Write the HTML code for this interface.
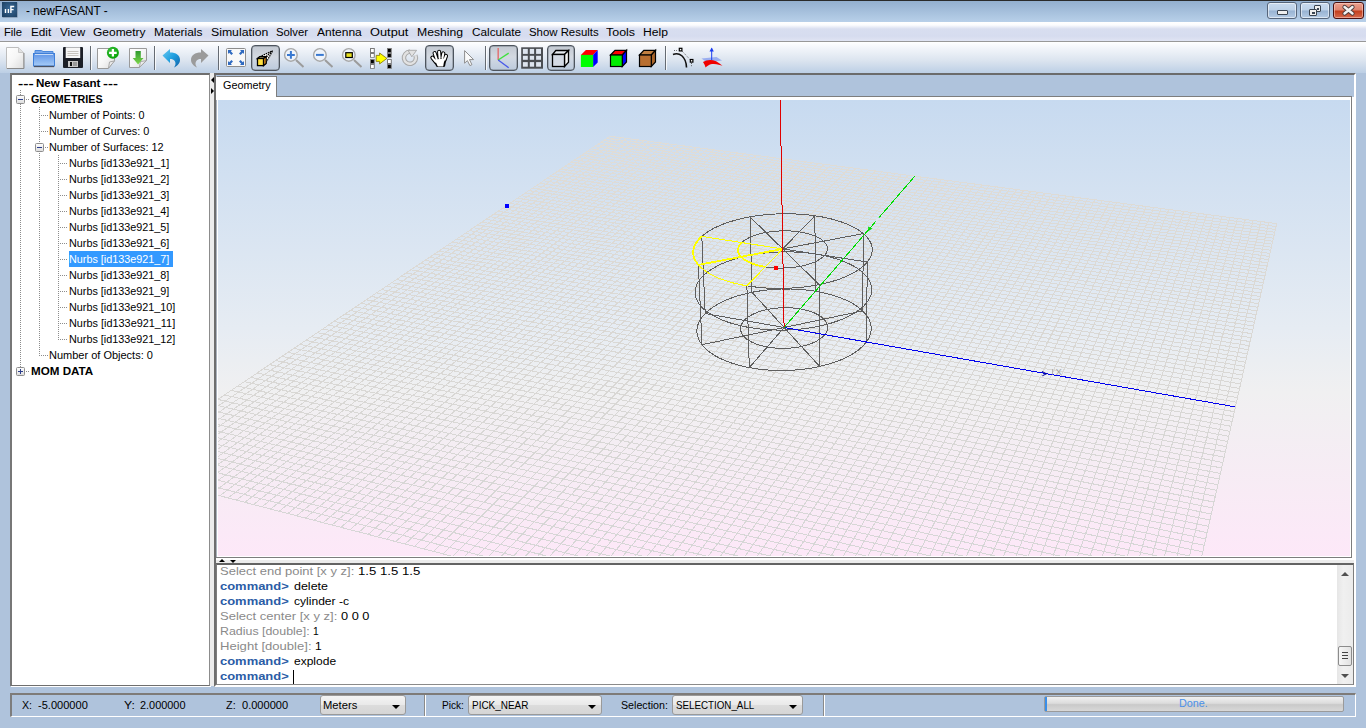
<!DOCTYPE html>
<html><head><meta charset="utf-8">
<style>
*{margin:0;padding:0;box-sizing:border-box}
html,body{width:1366px;height:728px;overflow:hidden}
body{position:relative;background:#afc3dc;font-family:"Liberation Sans",sans-serif;color:#000}
.a{position:absolute}
.t{position:absolute;white-space:nowrap;line-height:1}
#title{left:0;top:0;width:1366px;height:22px;background:linear-gradient(#93afcf,#b8d0e9);border-top:1px solid #2a2a2a}
#menu{left:0;top:22px;width:1366px;height:20px;background:linear-gradient(#ffffff 0,#fbfcfe 3px,#d8def0 7px,#d6dcef 75%,#e0e4f3 100%);border-bottom:1px solid #989898}
#tool{left:0;top:42px;width:1366px;height:31px;background:linear-gradient(#ffffff 0%,#f2f5fa 20%,#dbe4ef 60%,#bccfe5 100%)}
.mi{position:absolute;top:25px;font-size:12.5px;line-height:14px;white-space:nowrap}
.tree{position:absolute;font-size:11px;line-height:13px;white-space:nowrap;color:#000}
.con{position:absolute;left:220px;font-size:12px;line-height:14px;white-space:nowrap;color:#000}
.con b{color:#2a5ea8}
.con i{font-style:normal;color:#8a8a8a}
.st{position:absolute;top:699px;font-size:11px;line-height:13px;white-space:nowrap;color:#000}
.combo{position:absolute;top:695px;height:20px;border:1px solid #9a9a9a;border-radius:3px;background:linear-gradient(#f4f4f4,#e9e9e9 50%,#dcdcdc 51%,#d5d5d5);font-size:11px;line-height:17px;padding-left:3px;white-space:nowrap}
.combo:after{content:"";position:absolute;right:5px;top:9px;border-left:4px solid transparent;border-right:4px solid transparent;border-top:4px solid #000}
.btnp{position:absolute;top:45px;height:26px;border:1px solid #4e555e;border-radius:4px;background:linear-gradient(#c3c9d2 0,#d3d9e1 45%,#cfd7e2 55%,#bccadc 100%);box-shadow:inset 0 0 0 0.5px #7a828c}
.sep{position:absolute;top:46px;width:1px;height:24px;background:#7b8796;border-right:1px solid #f4f7fb;width:2px}
.tx{position:absolute;white-space:nowrap;transform-origin:0 0}
</style></head><body>
<div id="title" class="a"></div>
<div class="a" style="left:2px;top:2px;width:15px;height:15px;background:radial-gradient(circle at 55% 45%,#3a6a98,#1f4366 85%);box-shadow:0.5px 0.5px 0 #6a7d94"></div>
<svg class="a" style="left:0;top:0" width="20" height="20"><path d="M5.5 9V13M8.4 9V13M10.9 13V6.5H14.2M10.9 9.6H13.6" stroke="#fff" stroke-width="1.4" fill="none"/></svg>
<div class="a" style="left:1267px;top:2px;width:30px;height:17px;border:1px solid #56657a;border-radius:3px;background:linear-gradient(#c9daee 0,#bcd0e7 48%,#98b3d2 52%,#b5cbe5 100%);box-shadow:inset 0 0 0 1px rgba(255,255,255,.55)"></div>
<div class="a" style="left:1277px;top:10px;width:11px;height:5px;border:1px solid #3a4450;border-radius:1px;background:#eeeeee"></div>
<div class="a" style="left:1300px;top:2px;width:30px;height:17px;border:1px solid #56657a;border-radius:3px;background:linear-gradient(#c9daee 0,#bcd0e7 48%,#98b3d2 52%,#b5cbe5 100%);box-shadow:inset 0 0 0 1px rgba(255,255,255,.55)"></div>
<div class="a" style="left:1314px;top:5px;width:7px;height:7px;border:1.5px solid #3a4450;border-radius:1px;background:#eee"></div><div class="a" style="left:1316.5px;top:7.5px;width:2px;height:2px;border:1px solid #3a4450"></div>
<div class="a" style="left:1309px;top:9px;width:8px;height:7px;border:1.5px solid #3a4450;border-radius:1px;background:#eee"></div><div class="a" style="left:1311.5px;top:11.5px;width:3px;height:2px;border:1px solid #3a4450"></div>
<div class="a" style="left:1333px;top:2px;width:31px;height:17px;border:1px solid #4a1010;border-radius:3px;background:linear-gradient(#eaa08e 0,#de8470 45%,#c4401e 55%,#d66a4e 100%);box-shadow:inset 0 0 0 1px rgba(255,220,210,.5)"></div>
<svg class="a" style="left:1341px;top:4px" width="15" height="13" viewBox="0 0 15 13"><path d="M3.5 3 L11.5 9.5 M11.5 3 L3.5 9.5" stroke="#4a3a3a" stroke-width="4.2" stroke-linecap="round"/><path d="M3.5 3 L11.5 9.5 M11.5 3 L3.5 9.5" stroke="#f2f2f2" stroke-width="2.4" stroke-linecap="round"/></svg>
<div id="menu" class="a"></div>
<div id="tool" class="a"></div>
<!-- pressed buttons -->
<div class="btnp" style="left:251px;width:29px"></div>
<div class="btnp" style="left:425px;width:29px"></div>
<div class="btnp" style="left:489px;width:29px"></div>
<div class="btnp" style="left:547px;width:28px"></div>
<svg class="a" style="left:0;top:42px" width="740" height="31" viewBox="0 42 740 31">
<defs>
<linearGradient id="pg" x1="0" y1="0" x2="1" y2="1"><stop offset="0" stop-color="#ffffff"/><stop offset="0.5" stop-color="#f6f6f6"/><stop offset="1" stop-color="#dcdcdc"/></linearGradient>
<linearGradient id="fg" x1="0" y1="0" x2="0" y2="1"><stop offset="0" stop-color="#5f94e6"/><stop offset="1" stop-color="#a6ccf8"/></linearGradient>
<linearGradient id="gg" x1="0" y1="0" x2="0" y2="1"><stop offset="0" stop-color="#2f9a2f"/><stop offset="1" stop-color="#7fd84a"/></linearGradient>
<linearGradient id="ug" x1="0" y1="0" x2="1" y2="1"><stop offset="0" stop-color="#6cc8f0"/><stop offset="0.5" stop-color="#20a0e0"/><stop offset="1" stop-color="#1060a8"/></linearGradient>
<radialGradient id="cg" cx="0.4" cy="0.35" r="0.7"><stop offset="0" stop-color="#40c040"/><stop offset="1" stop-color="#00a000"/></radialGradient>
</defs>
<!-- new file -->
<path d="M6.5 47.5H18.5L23.5 52.5V68.5H6.5Z" fill="url(#pg)" stroke="#bdbdbd"/>
<path d="M7 68.5H24V53" stroke="#8a8a8a" fill="none"/>
<path d="M18.5 47.5V52.5H23.5" fill="#e2e2e2" stroke="#c8c8c8"/>
<!-- folder -->
<path d="M35 50.5H41.5L43 51.5H53V54H35Z" fill="#7aa8ea" stroke="#4a88dc"/>
<rect x="33.5" y="53.5" width="21" height="12.5" fill="url(#fg)" stroke="#3f7fd8"/>
<path d="M35 54.5H53" stroke="#c8dcf8"/>
<path d="M34 66.5H54" stroke="#4a5262" stroke-width="1.3"/>
<!-- save -->
<rect x="63" y="47" width="20" height="21" rx="1" fill="#1c1f27"/>
<rect x="65.7" y="47.3" width="14.5" height="10.7" fill="#f6f6f6"/>
<path d="M67.5 51.5H78.5M67.5 53.5H78.5M67.5 55.5H78.5" stroke="#c8c4be"/>
<rect x="68" y="61" width="10" height="6" fill="#c8c8c8"/>
<rect x="70" y="62" width="2" height="4" fill="#111"/>
<rect x="73" y="62" width="4" height="4" fill="#9a9a9a"/>
<!-- separators -->
<path d="M90.5 46V70M154.5 46V70M218.5 46V70M485.5 46V70M665.5 46V70" stroke="#656b73"/><path d="M91.5 46V70M155.5 46V70M219.5 46V70M486.5 46V70M666.5 46V70" stroke="#ffffff" stroke-opacity="0.8"/>
<!-- new doc plus -->
<path d="M97.5 48.5H114.5V60.7L108.3 68.5H97.5Z" fill="url(#pg)" stroke="#9a9a9a"/>
<path d="M108.5 68.2L109.5 62L114.5 60.9Z" fill="#ececec" stroke="#a0a0a0" stroke-width="0.9"/>
<circle cx="112.9" cy="52.8" r="6" fill="url(#cg)"/>
<path d="M112.9 49V56.6M109.1 52.8H116.7" stroke="#fff" stroke-width="2.2"/>
<!-- import -->
<path d="M129.5 48.5H146.5V60.5L139.2 67.5H129.5Z" fill="url(#pg)" stroke="#9a9a9a"/>
<path d="M139.4 67.3L140.5 61.5L146.3 60.7Z" fill="#ececec" stroke="#a0a0a0" stroke-width="0.9"/>
<path d="M135.5 51H140.8V58H143.5L138.1 64.5L132.7 58H135.5Z" fill="url(#gg)"/>
<!-- undo -->
<path d="M162.5 55.5L170 49V52.5C176 52.5 180 55 180 60C180 63.5 177 66 174 67.5C175.5 65.5 176 63.5 175 61.5C174 59.5 172 59 170 59V63Z" fill="url(#ug)"/>
<!-- redo -->
<path d="M208.5 55.5L201 49V52.5C195 52.5 191 55 191 60C191 63.5 194 66 197 67.5C195.5 65.5 195 63.5 196 61.5C197 59.5 199 59 201 59V63Z" fill="#9b9b9b"/>
<!-- fit -->
<rect x="226.5" y="48.5" width="19" height="18" rx="1" fill="#f8f8f8" stroke="#8c8c8c"/>
<g fill="#2f6ac0">
<path d="M228 50H232L230.8 51.2L233 53.4L231.4 55L229.2 52.8L228 54Z"/>
<path d="M244 50H240L241.2 51.2L239 53.4L240.6 55L242.8 52.8L244 54Z"/>
<path d="M228 65H232L230.8 63.8L233 61.6L231.4 60L229.2 62.2L228 61Z"/>
<path d="M244 65H240L241.2 63.8L239 61.6L240.6 60L242.8 62.2L244 61Z"/>
</g>
<!-- perspective cube -->
<path d="M259.5 56.8L272.7 50.7L266.2 63.4V56.6Z" fill="#fafafa"/><path d="M259.5 56.8L272.7 50.7M266.2 56.6L272.7 50.7M265 64.5L272.7 50.7" stroke="#000" stroke-width="1.2" stroke-dasharray="1.5 0.8"/>
<path d="M257.5 58.5L259.7 56.6H266.2L263.5 58.5Z" fill="#fff6a8" stroke="#000" stroke-width="1.3"/>
<path d="M263.5 58.5L266.2 56.6V63.4L263.5 65.6Z" fill="#f4a020" stroke="#000" stroke-width="1.3"/>
<rect x="257.5" y="58.5" width="6" height="7.1" fill="#ffe040" stroke="#000" stroke-width="1.3"/>
<!-- zoom in / out / box -->
<g stroke="#9c9c9c" stroke-width="2" fill="none"><path d="M296 60L303.5 67M325 60L332.5 67M354 60L361.5 67"/></g>
<g fill="#eef3fa" stroke="#a8a8a8" stroke-width="1.4">
<circle cx="290.9" cy="54.9" r="6.3"/><circle cx="319.9" cy="54.9" r="6.3"/><circle cx="348.8" cy="54.9" r="6.3"/></g>
<path d="M287 54.9H294.8M290.9 51V58.8" stroke="#3878d0" stroke-width="2"/>
<path d="M316 54.9H323.8" stroke="#3878d0" stroke-width="2"/>
<rect x="345.8" y="52.7" width="6.5" height="4.8" fill="#e8e020" stroke="#000" stroke-width="1.2"/>
<!-- swap -->
<g fill="#7a7a7a">
<rect x="370" y="48" width="4.8" height="9.7"/><rect x="370" y="59.1" width="4.8" height="9.7"/>
<rect x="387" y="48" width="4.8" height="9.7"/><rect x="387" y="59.1" width="4.8" height="9.7"/>
</g>
<rect x="371" y="49" width="2.8" height="3" fill="#fff"/><rect x="371" y="54" width="2.8" height="3" fill="#fff"/>
<rect x="371" y="60" width="2.8" height="3" fill="#000"/><rect x="371" y="65" width="2.8" height="3" fill="#fff"/>
<rect x="388" y="49" width="2.8" height="3" fill="#000"/><rect x="388" y="54" width="2.8" height="3" fill="#000"/>
<rect x="388" y="60" width="2.8" height="3" fill="#fff"/><rect x="388" y="65" width="2.8" height="3" fill="#000"/>
<path d="M376.2 55.4H379.6V53L386.9 58.4L379.6 63.9V61.4H376.2Z" fill="#ffff00" stroke="#807000" stroke-width="0.8"/>
<!-- rotate -->
<path d="M415.4 55.3A6 6 0 1 1 410 51.8" stroke="#a6a6a6" stroke-width="4.4" fill="none"/>
<path d="M415.4 55.3A6 6 0 1 1 410 51.8" stroke="#e2e2e2" stroke-width="2.4" fill="none"/>
<path d="M408 50.3L416.6 50.3L411.8 56.8Z" fill="#e2e2e2" stroke="#a6a6a6" stroke-width="0.9" stroke-linejoin="round"/>
<!-- hand -->
<g stroke="#000" stroke-linecap="round" fill="none">
<path d="M436.6 59L434.6 53.1M439.6 58L439.1 51.8M442.4 58L443.3 53.4M444.6 59.5L446 55.9M435.6 61.6L432.4 57.7" stroke-width="4.1"/>
<path d="M433.6 59.2L446.2 57.6L444.7 62.8L444.1 65.9H437.1Z" fill="#000" stroke-width="2" stroke-linejoin="round"/>
</g>
<g stroke="#fff" stroke-linecap="round" fill="none">
<path d="M436.6 59L434.6 53.1M439.6 58L439.1 51.8M442.4 58L443.3 53.4M444.6 59.5L446 55.9M435.6 61.6L432.4 57.7" stroke-width="2.1"/>
<path d="M434.6 59.6L445.2 58.4L443.8 62.8L443.2 66.5H437.8Z" fill="#fff" stroke="none"/>
</g>
<!-- pointer -->
<path d="M464.6 50.6V63.2L467.4 60.6L469.9 65.6L471.9 64.7L469.5 59.6H473.6Z" fill="#fbfbfb" stroke="#8e8e8e" stroke-width="1" stroke-linejoin="round"/>
<!-- axes -->
<path d="M498.2 60V48" stroke="#e07a7a" stroke-width="1.6"/>
<path d="M498.2 60L508.7 53.2" stroke="#40e040" stroke-width="1.4"/>
<path d="M498.2 60L508.7 67.7" stroke="#4a5ae8" stroke-width="1.4"/>
<!-- grid -->
<rect x="521.2" y="47.3" width="21.8" height="21.4" fill="#4a4d52"/>
<g fill="#dde4ee">
<rect x="522.9" y="48.9" width="4.9" height="5"/><rect x="529.8" y="48.9" width="4.3" height="5"/><rect x="536.1" y="48.9" width="4.9" height="5"/>
<rect x="522.9" y="55.8" width="4.9" height="4"/><rect x="529.8" y="55.8" width="4.3" height="4"/><rect x="536.1" y="55.8" width="4.9" height="4"/>
<rect x="522.9" y="62.1" width="4.9" height="4.6"/><rect x="529.8" y="62.1" width="4.3" height="4.6"/><rect x="536.1" y="62.1" width="4.9" height="4.6"/>
</g>
<!-- wire cube -->
<path d="M552.5 54.5L555.8 50.5H568.5L564.5 54.5Z" fill="#e4e8ee" stroke="#000" stroke-width="1.3"/>
<path d="M564.5 54.5L568.5 50.5V62.3L564.5 66.5Z" fill="#f4f4f4" stroke="#000" stroke-width="1.3"/>
<rect x="552.5" y="54.5" width="12" height="12" fill="#d4dae4" stroke="#000" stroke-width="1.3"/>
<!-- rgb cube -->
<path d="M580.9 54.9L585.9 49.9H597.7L593.1 54.9Z" fill="#ff0000"/>
<path d="M593.1 54.9L597.7 49.9V62.4L593.1 67Z" fill="#0000ff"/>
<rect x="580.9" y="54.9" width="12.2" height="12.1" fill="#00ff00"/>
<!-- rgb cube outlined -->
<path d="M610.5 55L615 50.3H626.5L622.3 55Z" fill="#ff0000" stroke="#000" stroke-width="1.2"/>
<path d="M622.3 55L626.5 50.3V62L622.3 66.5Z" fill="#0000ff" stroke="#000" stroke-width="1.2"/>
<rect x="610.5" y="55" width="11.8" height="11.5" fill="#00ee00" stroke="#000" stroke-width="1.2"/>
<!-- wood cube -->
<path d="M639.5 55L643.8 50.3H655.5L651.3 55Z" fill="#c27f40" stroke="#000" stroke-width="1.2"/>
<path d="M651.3 55L655.5 50.3V62L651.3 66.5Z" fill="#a8642a" stroke="#000" stroke-width="1.2"/>
<rect x="639.5" y="55" width="11.8" height="11.5" fill="#b86e30" stroke="#000" stroke-width="1.2"/>
<!-- curve -->
<path d="M673 54.5C679 52 686 56 686.5 67.5" stroke="#111" stroke-width="1.6" fill="none"/>
<path d="M674 50.5H677M682 51L690 59.5M691.5 63V67" stroke="#444" stroke-width="0.8" stroke-dasharray="1 1.2"/>
<rect x="679.3" y="48.3" width="2.6" height="2.6" fill="#fff" stroke="#000" stroke-width="1.2"/>
<rect x="690.3" y="59.5" width="2.6" height="2.6" fill="#fff" stroke="#000" stroke-width="1.2"/>
<!-- surface -->
<path d="M701.5 58.5L716.5 57L722 60.5L707 62.5Z" fill="#8aa0f0" opacity="0.8"/>
<path d="M703 62C708 59 715 58.5 722.5 65.8C720 64.8 716 63.5 712 64C709 64.5 707 66 705.5 67.5C705 65 704 63.5 703 62Z" fill="#f00000"/>
<path d="M711.7 60V48.5" stroke="#1a3cf0" stroke-width="1"/>
<path d="M709.5 51.5L711.7 47.5L713.8 51.5Z" fill="#1a3cf0"/>
</svg>
<!-- left panel -->
<div class="a" style="left:10px;top:73px;width:200px;height:613px;background:#fff;border-top:2px solid #6e6e6e;border-left:2px solid #777;border-right:1px solid #8c8c8c;border-bottom:1px solid #6e6e6e;box-shadow:1px 1px 0 #fff"></div>
<!-- vertical splitter -->
<div class="a" style="left:210px;top:73px;width:4px;height:613px;background:#ececec"></div>
<div class="a" style="left:211px;top:76.5px;border-top:3px solid transparent;border-bottom:3px solid transparent;border-right:3px solid #000"></div>
<div class="a" style="left:211px;top:88px;border-top:3px solid transparent;border-bottom:3px solid transparent;border-left:3px solid #000"></div>
<!-- right container -->
<div class="a" style="left:214px;top:73px;width:1142px;height:614px;border-top:2px solid #6b6b6b;border-left:2px solid #6e6e6e;border-right:2px solid #fff;border-bottom:2px solid #fff;background:#fff"></div>
<div class="a" style="left:216px;top:75px;width:1138px;height:22px;background:#afc3dc"></div><div class="a" style="left:216px;top:96px;width:1136px;height:1px;background:#7d7d7d"></div>
<div class="a" style="left:216px;top:76px;width:61px;height:22px;background:#fff;border-top:1px solid #7d7d7d;border-right:1px solid #7d7d7d;border-left:1px solid #fff"></div>
<div class="a" style="left:216px;top:97px;width:1138px;height:3px;background:#fff"></div>
<!-- viewport -->
<div class="a" style="left:216px;top:100px;width:1137px;height:459px;background:#fff"></div>
<svg class="a" style="left:218px;top:100px" width="1132" height="456" viewBox="0 0 1132 456">
<defs><linearGradient id="bg" x1="0" y1="0" x2="0" y2="1"><stop offset="0" stop-color="#c7daf0"/><stop offset="0.5" stop-color="#e6ecf3"/><stop offset="0.64" stop-color="#f0f0f1"/><stop offset="1" stop-color="#fde8f8"/></linearGradient><linearGradient id="gl" gradientUnits="userSpaceOnUse" x1="0" y1="30" x2="0" y2="456"><stop offset="0" stop-color="#e0ddd7"/><stop offset="0.45" stop-color="#dad8d4"/><stop offset="1" stop-color="#d6d6d6"/></linearGradient></defs>
<rect width="1132" height="456" fill="url(#bg)"/>
<path d="M-103.1 368.5L391.9 36.2M-103.1 368.5L942.3 640.5M-95.3 370.5L397.5 36.9M-95.2 363.1L944.4 631.2M-87.4 372.5L403.1 37.7M-87.3 357.9L946.5 622.0M-79.5 374.6L408.8 38.4M-79.6 352.7L948.5 613.0M-71.6 376.7L414.5 39.2M-72.0 347.5L950.5 604.1M-63.6 378.7L420.2 39.9M-64.4 342.5L952.5 595.3M-55.6 380.8L425.9 40.7M-56.9 337.5L954.4 586.7M-47.5 382.9L431.6 41.4M-49.6 332.5L956.3 578.2M-39.4 385.0L437.4 42.2M-42.3 327.6L958.2 569.9M-31.3 387.2L443.2 42.9M-35.1 322.8L960.1 561.7M-23.1 389.3L449.0 43.7M-27.9 318.0L961.9 553.6M-14.8 391.4L454.8 44.5M-20.9 313.3L963.7 545.6M-6.5 393.6L460.6 45.2M-13.9 308.6L965.5 537.7M1.8 395.8L466.4 46.0M-7.0 304.0L967.2 530.0M10.1 397.9L472.3 46.8M-0.2 299.4L968.9 522.4M18.5 400.1L478.2 47.5M6.5 294.9L970.6 514.9M27.0 402.3L484.1 48.3M13.2 290.4L972.3 507.5M35.5 404.5L490.0 49.1M19.7 286.0L973.9 500.2M44.0 406.8L496.0 49.9M26.3 281.6L975.5 493.0M52.6 409.0L501.9 50.6M32.7 277.3L977.1 485.9M61.3 411.2L507.9 51.4M39.1 273.0L978.7 478.9M70.0 413.5L513.9 52.2M45.4 268.8L980.3 472.0M78.7 415.8L519.9 53.0M51.6 264.6L981.8 465.2M87.5 418.0L526.0 53.8M57.8 260.5L983.3 458.5M96.3 420.3L532.0 54.6M63.9 256.4L984.8 451.9M105.2 422.7L538.1 55.4M69.9 252.3L986.3 445.3M114.1 425.0L544.2 56.2M75.9 248.3L987.7 438.9M123.0 427.3L550.3 57.0M81.8 244.4L989.2 432.6M132.1 429.7L556.5 57.8M87.6 240.4L990.6 426.3M141.1 432.0L562.6 58.6M93.4 236.6L992.0 420.1M150.2 434.4L568.8 59.4M99.1 232.7L993.3 414.0M159.4 436.8L575.0 60.2M104.8 228.9L994.7 408.0M168.6 439.2L581.2 61.0M110.4 225.1L996.0 402.1M177.9 441.6L587.5 61.9M115.9 221.4L997.3 396.2M187.2 444.0L593.7 62.7M121.4 217.7L998.6 390.4M196.6 446.4L600.0 63.5M126.9 214.1L999.9 384.7M206.0 448.9L606.3 64.3M132.3 210.5L1001.2 379.0M215.5 451.4L612.6 65.2M137.6 206.9L1002.5 373.5M225.0 453.8L619.0 66.0M142.9 203.3L1003.7 368.0M234.6 456.3L625.3 66.8M148.1 199.8L1004.9 362.5M244.2 458.8L631.7 67.7M153.3 196.4L1006.1 357.2M253.9 461.4L638.1 68.5M158.4 192.9L1007.3 351.9M263.7 463.9L644.6 69.3M163.5 189.5L1008.5 346.6M273.5 466.5L651.0 70.2M168.5 186.1L1009.7 341.5M283.3 469.0L657.5 71.0M173.5 182.8L1010.8 336.3M293.2 471.6L664.0 71.9M178.4 179.5L1012.0 331.3M303.2 474.2L670.5 72.7M183.3 176.2L1013.1 326.3M313.2 476.8L677.1 73.6M188.1 173.0L1014.2 321.4M323.3 479.4L683.6 74.5M192.9 169.8L1015.3 316.5M333.5 482.1L690.2 75.3M197.7 166.6L1016.4 311.7M343.7 484.7L696.8 76.2M202.4 163.4L1017.4 306.9M353.9 487.4L703.5 77.1M207.0 160.3L1018.5 302.2M364.3 490.1L710.1 77.9M211.6 157.2L1019.6 297.6M374.6 492.8L716.8 78.8M216.2 154.1L1020.6 293.0M385.1 495.5L723.5 79.7M220.7 151.1L1021.6 288.4M395.6 498.2L730.2 80.6M225.2 148.1L1022.6 283.9M406.2 501.0L737.0 81.5M229.7 145.1L1023.6 279.5M416.8 503.8L743.7 82.3M234.1 142.1L1024.6 275.1M427.5 506.5L750.5 83.2M238.4 139.2L1025.6 270.8M438.2 509.3L757.3 84.1M242.8 136.3L1026.6 266.5M449.1 512.1L764.2 85.0M247.0 133.4L1027.5 262.2M460.0 515.0L771.0 85.9M251.3 130.6L1028.5 258.0M470.9 517.8L777.9 86.8M255.5 127.7L1029.4 253.9M481.9 520.7L784.8 87.7M259.7 124.9L1030.3 249.7M493.0 523.6L791.8 88.6M263.8 122.2L1031.2 245.7M504.2 526.5L798.7 89.6M267.9 119.4L1032.2 241.6M515.4 529.4L805.7 90.5M272.0 116.7L1033.0 237.7M526.7 532.3L812.7 91.4M276.0 114.0L1033.9 233.7M538.0 535.3L819.8 92.3M280.0 111.3L1034.8 229.8M549.5 538.3L826.8 93.2M284.0 108.6L1035.7 226.0M561.0 541.3L833.9 94.2M287.9 106.0L1036.5 222.2M572.5 544.3L841.0 95.1M291.8 103.4L1037.4 218.4M584.2 547.3L848.1 96.0M295.7 100.8L1038.2 214.6M595.9 550.4L855.3 97.0M299.5 98.2L1039.1 210.9M607.7 553.4L862.5 97.9M303.3 95.7L1039.9 207.3M619.5 556.5L869.7 98.9M307.0 93.1L1040.7 203.7M631.5 559.6L876.9 99.8M310.8 90.6L1041.5 200.1M643.5 562.7L884.2 100.8M314.5 88.2L1042.3 196.5M655.6 565.9L891.5 101.7M318.2 85.7L1043.1 193.0M667.8 569.1L898.8 102.7M321.8 83.2L1043.9 189.5M680.0 572.2L906.1 103.6M325.4 80.8L1044.7 186.1M692.3 575.4L913.5 104.6M329.0 78.4L1045.4 182.7M704.7 578.7L920.9 105.6M332.5 76.0L1046.2 179.3M717.2 581.9L928.3 106.5M336.1 73.7L1047.0 175.9M729.8 585.2L935.8 107.5M339.6 71.3L1047.7 172.6M742.4 588.5L943.3 108.5M343.0 69.0L1048.4 169.3M755.1 591.8L950.8 109.5M346.5 66.7L1049.2 166.1M767.9 595.1L958.3 110.5M349.9 64.4L1049.9 162.9M780.8 598.5L965.8 111.5M353.3 62.1L1050.6 159.7M793.8 601.9L973.4 112.5M356.6 59.9L1051.3 156.5M806.8 605.3L981.0 113.5M359.9 57.6L1052.0 153.4M820.0 608.7L988.7 114.5M363.2 55.4L1052.7 150.3M833.2 612.1L996.3 115.5M366.5 53.2L1053.4 147.2M846.5 615.6L1004.0 116.5M369.8 51.0L1054.1 144.2M859.9 619.1L1011.8 117.5M373.0 48.9L1054.8 141.2M873.4 622.6L1019.5 118.5M376.2 46.7L1055.5 138.2M887.0 626.1L1027.3 119.5M379.4 44.6L1056.1 135.2M900.7 629.7L1035.1 120.5M382.5 42.5L1056.8 132.3M914.5 633.3L1043.0 121.6M385.7 40.4L1057.4 129.4M928.4 636.9L1050.8 122.6M388.8 38.3L1058.1 126.5M942.3 640.5L1058.7 123.6M391.9 36.2L1058.7 123.6" stroke="url(#gl)" stroke-width="1" fill="none" shape-rendering="crispEdges"/>
<path d="M648.4 241.9L649.8 239.9L651.0 237.7L651.9 235.6L652.6 233.5L653.0 231.3L653.3 229.2L653.2 227.0L652.9 224.9L652.4 222.8L651.7 220.7L650.7 218.7L649.5 216.7L648.1 214.7L646.5 212.8L644.6 210.9L642.6 209.1L640.4 207.3L638.0 205.6L635.4 204.0L632.6 202.4L629.7 200.9L626.6 199.5L623.4 198.2L620.0 196.9L616.5 195.7L612.9 194.7L609.1 193.7L605.3 192.8L601.4 191.9L597.4 191.2L593.3 190.6L589.2 190.1L585.0 189.7L580.7 189.3L576.4 189.1L572.2 189.0L567.8 189.0L563.5 189.0L559.2 189.2L554.9 189.5L550.7 189.8L546.4 190.3L542.2 190.9L538.1 191.5L534.0 192.3L530.1 193.2L526.2 194.1L522.3 195.1L518.6 196.2L515.0 197.5L511.6 198.7L508.2 200.1L505.0 201.6L502.0 203.1L499.1 204.7L496.3 206.3L493.8 208.1L491.4 209.8L489.2 211.7L487.2 213.6L485.4 215.5L483.8 217.5L482.4 219.5L481.3 221.6L480.3 223.6L479.6 225.7L479.2 227.9L478.9 230.0L478.9 232.1L479.2 234.3L479.7 236.4L480.4 238.5L481.4 240.6L482.6 242.7L484.0 244.7L485.7 246.7L487.7 248.7L489.8 250.6L492.2 252.5L494.8 254.3L497.6 256.0L500.7 257.7L503.9 259.2L507.3 260.7L510.9 262.1L514.7 263.4L518.7 264.6L522.7 265.8L527.0 266.8L531.3 267.6L535.8 268.4L540.3 269.1L545.0 269.6L549.7 270.0L554.5 270.3L559.3 270.5L564.1 270.5L568.9 270.4L573.7 270.2L578.5 269.9L583.3 269.5L588.0 268.9L592.6 268.2L597.1 267.4L601.6 266.4L605.9 265.4L610.1 264.3L614.2 263.0L618.1 261.7L621.9 260.3L625.4 258.7L628.8 257.1L632.0 255.4L635.0 253.7L637.8 251.9L640.4 250.0L642.7 248.0L644.9 246.0L646.7 244.0L648.4 241.9M648.8 202.5L650.3 200.5L651.5 198.5L652.4 196.4L653.1 194.4L653.5 192.3L653.7 190.3L653.7 188.2L653.4 186.2L652.9 184.2L652.1 182.2L651.2 180.2L649.9 178.3L648.5 176.4L646.9 174.6L645.0 172.8L642.9 171.0L640.7 169.3L638.2 167.7L635.6 166.1L632.8 164.6L629.8 163.2L626.7 161.9L623.4 160.6L620.0 159.4L616.5 158.3L612.8 157.2L609.1 156.3L605.2 155.4L601.2 154.6L597.1 154.0L593.0 153.4L588.8 152.9L584.6 152.5L580.3 152.2L576.0 152.0L571.6 151.8L567.2 151.8L562.9 151.9L558.5 152.1L554.2 152.3L549.8 152.7L545.6 153.1L541.3 153.7L537.1 154.3L533.0 155.1L529.0 155.9L525.0 156.8L521.2 157.8L517.4 158.8L513.8 160.0L510.2 161.2L506.9 162.6L503.6 163.9L500.5 165.4L497.6 166.9L494.8 168.5L492.2 170.2L489.8 171.9L487.6 173.7L485.5 175.5L483.7 177.3L482.1 179.2L480.7 181.2L479.5 183.1L478.6 185.1L477.9 187.1L477.4 189.2L477.1 191.2L477.1 193.3L477.4 195.3L477.9 197.4L478.6 199.4L479.6 201.4L480.8 203.4L482.3 205.4L484.0 207.3L485.9 209.2L488.1 211.0L490.5 212.8L493.2 214.5L496.0 216.2L499.1 217.7L502.4 219.3L505.8 220.7L509.5 222.0L513.3 223.3L517.3 224.4L521.5 225.5L525.7 226.5L530.1 227.3L534.7 228.0L539.3 228.7L544.0 229.2L548.8 229.6L553.6 229.8L558.5 230.0L563.4 230.0L568.2 230.0L573.1 229.8L578.0 229.4L582.8 229.0L587.6 228.4L592.3 227.8L596.9 227.0L601.4 226.1L605.8 225.1L610.0 224.0L614.2 222.8L618.1 221.5L621.9 220.1L625.6 218.7L629.0 217.1L632.2 215.5L635.3 213.8L638.1 212.0L640.7 210.2L643.1 208.4L645.3 206.5L647.2 204.5L648.8 202.5M649.3 162.0L650.7 160.1L651.9 158.2L652.9 156.2L653.6 154.3L654.0 152.3L654.3 150.3L654.2 148.4L653.9 146.4L653.4 144.5L652.6 142.6L651.6 140.7L650.4 138.9L648.9 137.1L647.3 135.3L645.4 133.6L643.3 132.0L641.0 130.4L638.5 128.8L635.9 127.3L633.0 125.9L630.0 124.5L626.9 123.2L623.5 122.0L620.1 120.9L616.5 119.8L612.8 118.8L609.0 117.9L605.0 117.1L601.0 116.4L596.9 115.8L592.7 115.2L588.5 114.7L584.2 114.3L579.8 114.1L575.5 113.9L571.0 113.8L566.6 113.7L562.2 113.8L557.8 114.0L553.4 114.2L549.0 114.6L544.7 115.0L540.4 115.5L536.1 116.2L532.0 116.9L527.9 117.6L523.9 118.5L520.0 119.5L516.2 120.5L512.5 121.6L508.9 122.8L505.5 124.0L502.2 125.4L499.0 126.8L496.0 128.2L493.2 129.7L490.6 131.3L488.1 133.0L485.9 134.6L483.8 136.4L482.0 138.1L480.3 140.0L478.9 141.8L477.7 143.7L476.8 145.6L476.0 147.5L475.5 149.5L475.3 151.4L475.3 153.4L475.5 155.3L476.0 157.3L476.7 159.2L477.7 161.1L479.0 163.0L480.4 164.9L482.2 166.7L484.1 168.5L486.4 170.3L488.8 172.0L491.5 173.6L494.4 175.2L497.5 176.7L500.8 178.2L504.3 179.5L508.0 180.8L511.9 182.0L515.9 183.1L520.1 184.1L524.5 185.0L528.9 185.8L533.5 186.5L538.2 187.1L543.0 187.6L547.8 188.0L552.7 188.2L557.6 188.4L562.6 188.4L567.6 188.3L572.5 188.1L577.5 187.8L582.3 187.4L587.2 186.9L591.9 186.2L596.6 185.5L601.2 184.6L605.6 183.6L610.0 182.6L614.1 181.4L618.2 180.2L622.0 178.9L625.7 177.5L629.2 176.0L632.5 174.4L635.6 172.8L638.4 171.1L641.1 169.4L643.5 167.6L645.7 165.8L647.6 163.9L649.3 162.0M606.8 234.6L607.5 233.6L608.2 232.6L608.7 231.5L609.1 230.4L609.4 229.4L609.6 228.3L609.6 227.2L609.5 226.2L609.3 225.1L609.0 224.1L608.6 223.0L608.1 222.0L607.4 221.0L606.6 220.0L605.8 219.1L604.8 218.2L603.7 217.2L602.5 216.4L601.3 215.5L599.9 214.7L598.4 213.9L596.9 213.2L595.3 212.5L593.6 211.9L591.8 211.2L590.0 210.7L588.1 210.2L586.2 209.7L584.2 209.3L582.1 208.9L580.0 208.6L577.9 208.3L575.8 208.1L573.6 207.9L571.4 207.8L569.2 207.7L567.0 207.7L564.8 207.7L562.5 207.8L560.3 208.0L558.2 208.1L556.0 208.4L553.8 208.7L551.7 209.0L549.7 209.4L547.6 209.9L545.6 210.4L543.7 210.9L541.8 211.5L540.0 212.1L538.2 212.8L536.6 213.5L535.0 214.3L533.4 215.0L532.0 215.9L530.6 216.7L529.4 217.6L528.2 218.5L527.2 219.5L526.2 220.4L525.4 221.4L524.6 222.4L524.0 223.5L523.5 224.5L523.0 225.5L522.8 226.6L522.6 227.7L522.5 228.7L522.6 229.8L522.8 230.8L523.1 231.9L523.5 232.9L524.1 234.0L524.7 235.0L525.5 236.0L526.4 237.0L527.4 237.9L528.5 238.9L529.7 239.8L531.1 240.6L532.5 241.5L534.0 242.3L535.6 243.0L537.3 243.7L539.1 244.4L541.0 245.0L542.9 245.6L545.0 246.1L547.0 246.6L549.2 247.0L551.3 247.4L553.6 247.7L555.8 247.9L558.1 248.1L560.4 248.3L562.8 248.3L565.1 248.4L567.4 248.3L569.8 248.2L572.1 248.1L574.4 247.9L576.7 247.6L579.0 247.3L581.2 246.9L583.4 246.4L585.5 245.9L587.5 245.4L589.5 244.8L591.5 244.2L593.3 243.5L595.1 242.7L596.8 242.0L598.4 241.2L599.9 240.3L601.3 239.4L602.6 238.5L603.8 237.6L604.9 236.6L605.9 235.6L606.8 234.6M606.5 155.4L607.3 154.5L608.0 153.5L608.5 152.6L608.9 151.6L609.2 150.6L609.4 149.6L609.4 148.7L609.4 147.7L609.2 146.7L608.8 145.8L608.4 144.8L607.9 143.9L607.2 143.0L606.4 142.1L605.5 141.2L604.5 140.3L603.4 139.5L602.2 138.7L600.9 137.9L599.5 137.2L598.0 136.5L596.4 135.8L594.7 135.2L593.0 134.6L591.2 134.1L589.3 133.5L587.4 133.1L585.4 132.6L583.3 132.2L581.2 131.9L579.1 131.6L576.9 131.4L574.7 131.2L572.5 131.0L570.2 130.9L568.0 130.8L565.7 130.8L563.4 130.9L561.2 131.0L558.9 131.1L556.7 131.3L554.4 131.5L552.2 131.8L550.1 132.1L547.9 132.5L545.8 132.9L543.8 133.3L541.8 133.8L539.9 134.4L538.0 135.0L536.2 135.6L534.5 136.2L532.8 136.9L531.3 137.6L529.8 138.4L528.4 139.2L527.1 140.0L525.9 140.8L524.8 141.7L523.8 142.6L523.0 143.5L522.2 144.4L521.5 145.3L521.0 146.3L520.6 147.3L520.3 148.2L520.1 149.2L520.0 150.2L520.1 151.1L520.3 152.1L520.6 153.1L521.0 154.0L521.6 155.0L522.3 155.9L523.1 156.8L524.0 157.7L525.0 158.6L526.1 159.4L527.4 160.3L528.8 161.1L530.2 161.8L531.8 162.5L533.4 163.2L535.2 163.9L537.0 164.5L539.0 165.1L540.9 165.6L543.0 166.1L545.1 166.5L547.3 166.9L549.6 167.2L551.8 167.5L554.2 167.7L556.5 167.9L558.9 168.0L561.3 168.1L563.7 168.1L566.1 168.0L568.5 167.9L570.9 167.8L573.3 167.6L575.6 167.3L577.9 167.0L580.2 166.7L582.5 166.3L584.6 165.8L586.8 165.3L588.8 164.8L590.8 164.2L592.7 163.5L594.5 162.9L596.3 162.2L597.9 161.4L599.5 160.6L600.9 159.8L602.3 159.0L603.5 158.1L604.6 157.2L605.6 156.3L606.5 155.4M648.4 241.9L649.3 162.0M566.1 227.5L648.4 241.9M564.7 148.9L649.3 162.0M644.6 210.9L645.4 133.6M566.1 227.5L644.6 210.9M564.7 148.9L645.4 133.6M597.4 191.2L596.9 115.8M566.1 227.5L597.4 191.2M564.7 148.9L596.9 115.8M534.0 192.3L532.0 116.9M566.1 227.5L534.0 192.3M564.7 148.9L532.0 116.9M487.2 213.6L483.8 136.4M566.1 227.5L487.2 213.6M564.7 148.9L483.8 136.4M484.0 244.7L480.4 164.9M566.1 227.5L484.0 244.7M564.7 148.9L480.4 164.9M531.3 267.6L528.9 185.8M566.1 227.5L531.3 267.6M564.7 148.9L528.9 185.8M601.6 266.4L601.2 184.6M566.1 227.5L601.6 266.4M564.7 148.9L601.2 184.6" stroke="#5e5e5e" stroke-width="1" fill="none" shape-rendering="crispEdges"/>
<path d="M480.4 164.9L482.2 166.7L484.1 168.5L486.4 170.3L488.8 172.0L491.5 173.6L494.4 175.2L497.5 176.7L500.8 178.2L504.3 179.5L508.0 180.8L511.9 182.0L515.9 183.1L520.1 184.1L524.5 185.0L528.9 185.8M564.7 148.9L483.8 136.4M564.7 148.9L528.9 185.8" stroke="#ffff00" stroke-width="1" fill="none" shape-rendering="crispEdges"/>
<path d="M483.8 136.4L482.0 138.1L480.3 140.0L478.9 141.8L477.7 143.7L476.8 145.6L476.0 147.5L475.5 149.5L475.3 151.4L475.3 153.4L475.5 155.3L476.0 157.3L476.7 159.2L477.7 161.1L479.0 163.0L480.4 164.9M523.8 142.6L523.0 143.5L522.2 144.4L521.5 145.3L521.0 146.3L520.6 147.3L520.3 148.2L520.1 149.2L520.0 150.2L520.1 151.1L520.3 152.1L520.6 153.1L521.0 154.0L521.6 155.0L522.3 155.9L523.1 156.8L524.0 157.7L525.0 158.6L526.1 159.4L527.4 160.3L528.8 161.1L530.2 161.8L531.8 162.5L533.4 163.2L535.2 163.9L537.0 164.5L539.0 165.1L540.9 165.6L543.0 166.1L545.1 166.5L547.3 166.9M564.7 148.9L480.4 164.9" stroke="#ffff00" stroke-width="1.8" fill="none" shape-rendering="crispEdges"/>
<path d="M566.1 227.5L1017.4 306.9" stroke="#0000ee" stroke-width="1" shape-rendering="crispEdges"/>
<path d="M566.1 227.5L696.8 76.2" stroke="#00dd00" stroke-width="1" shape-rendering="crispEdges"/>
<path d="M566.1 227.5L388.7 -10235.0" stroke="#e00000" stroke-width="1" shape-rendering="crispEdges"/>
<rect x="287" y="104" width="4" height="4" fill="#0000ff"/>
<rect x="556" y="166" width="4" height="4" fill="#ff0000"/>
<path d="M824 271.5L828.5 273.8L824.3 275.8" stroke="#000090" fill="none" stroke-width="1"/>
<path d="M834.5 269V274.5" stroke="#b4b4b4" stroke-width="1"/>
<text x="837.5" y="275" font-size="9.5" fill="#a4a4a4" font-family="Liberation Sans">X</text>
<path d="M650 126.5L654.5 128.5L650.5 131Z" fill="#00dd00"/>
<path d="M657.8 121.5L661.2 117.4" stroke="#dde6f2" stroke-width="1.6"/>
</svg><svg class="a" style="left:0;top:0" width="210" height="400"><defs><linearGradient id="bxg" x1="0" y1="0" x2="0" y2="1"><stop offset="0" stop-color="#fff"/><stop offset="1" stop-color="#dcdcdc"/></linearGradient></defs><path d="M20.5 90V371M39.5 107V355M58.5 155V339M39 115.5H49M39 131.5H49M39 147.5H49M39 355.5H49M20 99.5H30M20 371.5H30M58 163.5H68M58 179.5H68M58 195.5H68M58 211.5H68M58 227.5H68M58 243.5H68M58 259.5H68M58 275.5H68M58 291.5H68M58 307.5H68M58 323.5H68M58 339.5H68" stroke="#8c8c8c" stroke-width="1" stroke-dasharray="1 1" fill="none" shape-rendering="crispEdges"/><rect x="16.5" y="95.5" width="8" height="8" rx="1" fill="url(#bxg)" stroke="#8e8e8e"/><path d="M18 99.5H23" stroke="#2b3d8c" shape-rendering="crispEdges"/><rect x="35.5" y="143.5" width="8" height="8" rx="1" fill="url(#bxg)" stroke="#8e8e8e"/><path d="M37 147.5H42" stroke="#2b3d8c" shape-rendering="crispEdges"/><rect x="16.5" y="367.5" width="8" height="8" rx="1" fill="url(#bxg)" stroke="#8e8e8e"/><path d="M18 371.5H23" stroke="#2b3d8c" shape-rendering="crispEdges"/><path d="M20.5 369V374" stroke="#2b3d8c" shape-rendering="crispEdges"/></svg>
<div class="a" style="left:69px;top:251px;width:104px;height:16px;background:#3399ff"></div><!-- viewport borders -->
<div class="a" style="left:216px;top:100px;width:1px;height:458px;background:#a9b1bc"></div>
<div class="a" style="left:1350px;top:100px;width:1px;height:457px;background:#fff"></div>
<div class="a" style="left:1351px;top:96px;width:1px;height:462px;background:#7d7d7d"></div>
<div class="a" style="left:218px;top:556px;width:1133px;height:1px;background:#fff"></div>
<div class="a" style="left:216px;top:557px;width:1136px;height:1px;background:#7d7d7d"></div>
<!-- horizontal splitter -->
<div class="a" style="left:216px;top:558px;width:1138px;height:5px;background:#fff"></div>
<div class="a" style="left:216px;top:560px;width:1138px;height:3px;background:#ececec"></div>
<div class="a" style="left:219px;top:559px;border-left:3px solid transparent;border-right:3px solid transparent;border-bottom:3px solid #000"></div>
<div class="a" style="left:230px;top:560px;border-left:3px solid transparent;border-right:3px solid transparent;border-top:3px solid #000"></div>
<!-- console -->
<div class="a" style="left:216px;top:563px;width:1138px;height:122px;background:#fff;border-top:2px solid #636363;border-left:1px solid #7d7d7d;border-right:1px solid #7d7d7d;border-bottom:1px solid #8a8a8a"></div>
<div class="a" style="left:1337px;top:565px;width:16px;height:119px;background:linear-gradient(90deg,#e6e6e6,#f0f0f0 40%,#ebebeb)"></div>
<div class="a" style="left:1341px;top:572px;border-left:4px solid transparent;border-right:4px solid transparent;border-bottom:4px solid #505050"></div>
<div class="a" style="left:1341px;top:674px;border-left:4px solid transparent;border-right:4px solid transparent;border-top:4px solid #505050"></div>
<div class="a" style="left:1338px;top:646px;width:14px;height:20px;border:1px solid #8c8c8c;border-radius:2px;background:linear-gradient(90deg,#f6f6f6,#e2e2e2)"></div>
<div class="a" style="left:1342px;top:652px;width:6px;height:1px;background:#444;box-shadow:0 3px 0 #444,0 6px 0 #444"></div>
<div class="a" style="left:293px;top:670px;width:1px;height:14px;background:#000"></div>
<!-- status bar -->
<div class="a" style="left:10px;top:693px;width:1346px;height:24px;border-top:2px solid #7e7b78;border-left:2px solid #7d7d7d;border-bottom:1px solid #fff;border-right:1px solid #fff"></div>
<div class="combo" style="left:320px;width:86px"></div>
<div class="a" style="left:424px;top:695px;width:1px;height:21px;background:#8a8a8a;border-right:1px solid #fff;width:2px"></div>
<div class="combo" style="left:468px;width:134px"></div>
<div class="combo" style="left:672px;width:131px"></div>
<div class="a" style="left:823px;top:695px;width:2px;height:21px;background:#8a8a8a;border-right:1px solid #fff"></div>
<div class="a" style="left:1044px;top:696px;width:300px;height:16px;border:1px solid #9a9a9a;border-radius:2px;background:linear-gradient(#f0f0f0,#dcdcdc 45%,#c9c9c9 55%,#d8d8d8)"></div>
<div class="a" style="left:1045px;top:697px;width:2px;height:14px;background:#3a8ee8"></div>
<div class="tx" style="left:25.93px;top:4.99px;font-size:12.3px;line-height:12.3px;transform:scaleX(0.9594)">- newFASANT -</div>
<div class="tx" style="left:4.05px;top:25.80px;font-size:11.7px;line-height:11.7px;transform:scaleX(0.9605)">File</div>
<div class="tx" style="left:30.93px;top:25.80px;font-size:11.7px;line-height:11.7px;transform:scaleX(1.0050)">Edit</div>
<div class="tx" style="left:59.93px;top:25.80px;font-size:11.7px;line-height:11.7px;transform:scaleX(1.0005)">View</div>
<div class="tx" style="left:92.92px;top:25.80px;font-size:11.7px;line-height:11.7px;transform:scaleX(1.0243)">Geometry</div>
<div class="tx" style="left:154.12px;top:25.80px;font-size:11.7px;line-height:11.7px;transform:scaleX(1.0218)">Materials</div>
<div class="tx" style="left:210.81px;top:25.80px;font-size:11.7px;line-height:11.7px;transform:scaleX(1.0495)">Simulation</div>
<div class="tx" style="left:276.05px;top:25.80px;font-size:11.7px;line-height:11.7px;transform:scaleX(0.9657)">Solver</div>
<div class="tx" style="left:317.12px;top:25.80px;font-size:11.7px;line-height:11.7px;transform:scaleX(1.0279)">Antenna</div>
<div class="tx" style="left:369.89px;top:25.80px;font-size:11.7px;line-height:11.7px;transform:scaleX(1.0949)">Output</div>
<div class="tx" style="left:416.91px;top:25.80px;font-size:11.7px;line-height:11.7px;transform:scaleX(1.0427)">Meshing</div>
<div class="tx" style="left:472.33px;top:25.80px;font-size:11.7px;line-height:11.7px;transform:scaleX(1.0063)">Calculate</div>
<div class="tx" style="left:528.64px;top:25.80px;font-size:11.7px;line-height:11.7px;transform:scaleX(0.9740)">Show Results</div>
<div class="tx" style="left:606.10px;top:25.80px;font-size:11.7px;line-height:11.7px;transform:scaleX(1.0660)">Tools</div>
<div class="tx" style="left:643.01px;top:25.80px;font-size:11.7px;line-height:11.7px;transform:scaleX(1.0385)">Help</div>
<div class="tx" style="left:222.97px;top:80.07px;font-size:10.9px;line-height:10.9px;transform:scaleX(0.9949)">Geometry</div>
<div class="tx" style="left:17.57px;top:78.46px;font-size:10.8px;line-height:10.8px;font-weight:700;transform:scaleX(1.4598)">---</div>
<div class="tx" style="left:35.74px;top:78.46px;font-size:10.8px;line-height:10.8px;font-weight:700;transform:scaleX(1.0738)">New Fasant</div>
<div class="tx" style="left:102.80px;top:78.46px;font-size:10.8px;line-height:10.8px;font-weight:700;transform:scaleX(1.3793)">---</div>
<div class="tx" style="left:31.07px;top:94.36px;font-size:10.8px;line-height:10.8px;font-weight:700;transform:scaleX(0.9939)">GEOMETRIES</div>
<div class="tx" style="left:49.27px;top:110.36px;font-size:10.8px;line-height:10.8px;transform:scaleX(1.0004)">Number of Points: 0</div>
<div class="tx" style="left:49.36px;top:126.36px;font-size:10.8px;line-height:10.8px;transform:scaleX(1.0076)">Number of Curves: 0</div>
<div class="tx" style="left:49.37px;top:142.36px;font-size:10.8px;line-height:10.8px;transform:scaleX(1.0056)">Number of Surfaces: 12</div>
<div class="tx" style="left:68.87px;top:158.26px;font-size:10.8px;line-height:10.8px;transform:scaleX(1.0001)">Nurbs [id133e921_1]</div>
<div class="tx" style="left:68.87px;top:174.26px;font-size:10.8px;line-height:10.8px;transform:scaleX(1.0001)">Nurbs [id133e921_2]</div>
<div class="tx" style="left:68.87px;top:190.26px;font-size:10.8px;line-height:10.8px;transform:scaleX(1.0001)">Nurbs [id133e921_3]</div>
<div class="tx" style="left:68.87px;top:206.26px;font-size:10.8px;line-height:10.8px;transform:scaleX(1.0001)">Nurbs [id133e921_4]</div>
<div class="tx" style="left:68.87px;top:222.26px;font-size:10.8px;line-height:10.8px;transform:scaleX(1.0001)">Nurbs [id133e921_5]</div>
<div class="tx" style="left:68.87px;top:238.26px;font-size:10.8px;line-height:10.8px;transform:scaleX(1.0001)">Nurbs [id133e921_6]</div>
<div class="tx" style="left:68.87px;top:254.26px;font-size:10.8px;line-height:10.8px;color:#fff;transform:scaleX(1.0001)">Nurbs [id133e921_7]</div>
<div class="tx" style="left:68.87px;top:270.26px;font-size:10.8px;line-height:10.8px;transform:scaleX(1.0001)">Nurbs [id133e921_8]</div>
<div class="tx" style="left:68.87px;top:286.26px;font-size:10.8px;line-height:10.8px;transform:scaleX(1.0001)">Nurbs [id133e921_9]</div>
<div class="tx" style="left:68.87px;top:302.26px;font-size:10.8px;line-height:10.8px;transform:scaleX(0.9990)">Nurbs [id133e921_10]</div>
<div class="tx" style="left:68.87px;top:318.26px;font-size:10.8px;line-height:10.8px;transform:scaleX(1.0068)">Nurbs [id133e921_11]</div>
<div class="tx" style="left:68.87px;top:334.26px;font-size:10.8px;line-height:10.8px;transform:scaleX(0.9990)">Nurbs [id133e921_12]</div>
<div class="tx" style="left:49.16px;top:350.36px;font-size:10.8px;line-height:10.8px;transform:scaleX(1.0183)">Number of Objects: 0</div>
<div class="tx" style="left:31.23px;top:366.36px;font-size:10.8px;line-height:10.8px;font-weight:700;transform:scaleX(1.0770)">MOM DATA</div>
<div class="tx" style="left:219.98px;top:566.11px;font-size:11.8px;line-height:11.8px;color:#8a8a8a;transform:scaleX(1.1006)">Select end point [x y z]:</div>
<div class="tx" style="left:357.97px;top:566.11px;font-size:11.8px;line-height:11.8px;transform:scaleX(1.1163)">1.5 1.5 1.5</div>
<div class="tx" style="left:219.98px;top:581.21px;font-size:11.8px;line-height:11.8px;font-weight:700;color:#2b5ca6;transform:scaleX(1.0979)">command&gt;</div>
<div class="tx" style="left:293.60px;top:581.21px;font-size:11.8px;line-height:11.8px;transform:scaleX(1.0573)">delete</div>
<div class="tx" style="left:219.98px;top:596.21px;font-size:11.8px;line-height:11.8px;font-weight:700;color:#2b5ca6;transform:scaleX(1.0979)">command&gt;</div>
<div class="tx" style="left:293.62px;top:596.21px;font-size:11.8px;line-height:11.8px;transform:scaleX(1.0223)">cylinder -c</div>
<div class="tx" style="left:219.98px;top:656.21px;font-size:11.8px;line-height:11.8px;font-weight:700;color:#2b5ca6;transform:scaleX(1.0979)">command&gt;</div>
<div class="tx" style="left:293.62px;top:656.21px;font-size:11.8px;line-height:11.8px;transform:scaleX(1.0177)">explode</div>
<div class="tx" style="left:219.98px;top:671.21px;font-size:11.8px;line-height:11.8px;font-weight:700;color:#2b5ca6;transform:scaleX(1.0979)">command&gt;</div>
<div class="tx" style="left:219.98px;top:611.21px;font-size:11.8px;line-height:11.8px;color:#8a8a8a;transform:scaleX(1.1047)">Select center [x y z]:</div>
<div class="tx" style="left:341.09px;top:611.21px;font-size:11.8px;line-height:11.8px;transform:scaleX(1.0827)">0 0 0</div>
<div class="tx" style="left:220.00px;top:626.21px;font-size:11.8px;line-height:11.8px;color:#8a8a8a;transform:scaleX(1.0507)">Radius [double]:</div>
<div class="tx" style="left:312.99px;top:626.21px;font-size:11.8px;line-height:11.8px;transform:scaleX(0.8721)">1</div>
<div class="tx" style="left:219.98px;top:641.21px;font-size:11.8px;line-height:11.8px;color:#8a8a8a;transform:scaleX(1.1078)">Height [double]:</div>
<div class="tx" style="left:314.52px;top:641.21px;font-size:11.8px;line-height:11.8px;transform:scaleX(1.0145)">1</div>
<div class="tx" style="left:21.67px;top:699.73px;font-size:10.6px;line-height:10.6px;transform:scaleX(1.0035)">X:</div>
<div class="tx" style="left:38.16px;top:699.73px;font-size:10.6px;line-height:10.6px;transform:scaleX(1.0433)">-5.000000</div>
<div class="tx" style="left:123.71px;top:699.73px;font-size:10.6px;line-height:10.6px;transform:scaleX(1.1526)">Y:</div>
<div class="tx" style="left:140.26px;top:699.73px;font-size:10.6px;line-height:10.6px;transform:scaleX(1.0291)">2.000000</div>
<div class="tx" style="left:225.86px;top:699.73px;font-size:10.6px;line-height:10.6px;transform:scaleX(1.0264)">Z:</div>
<div class="tx" style="left:241.76px;top:699.73px;font-size:10.6px;line-height:10.6px;transform:scaleX(1.0429)">0.000000</div>
<div class="tx" style="left:323.05px;top:699.73px;font-size:10.6px;line-height:10.6px;transform:scaleX(1.0589)">Meters</div>
<div class="tx" style="left:441.70px;top:699.73px;font-size:10.6px;line-height:10.6px;transform:scaleX(0.9539)">Pick:</div>
<div class="tx" style="left:471.50px;top:699.73px;font-size:10.6px;line-height:10.6px;transform:scaleX(0.9390)">PICK_NEAR</div>
<div class="tx" style="left:620.87px;top:699.73px;font-size:10.6px;line-height:10.6px;transform:scaleX(1.0069)">Selection:</div>
<div class="tx" style="left:675.71px;top:699.73px;font-size:10.6px;line-height:10.6px;transform:scaleX(0.9232)">SELECTION_ALL</div>
<div class="tx" style="left:1178.67px;top:698.13px;font-size:10.6px;line-height:10.6px;color:#4a90e8;transform:scaleX(1.0207)">Done.</div></body></html>
